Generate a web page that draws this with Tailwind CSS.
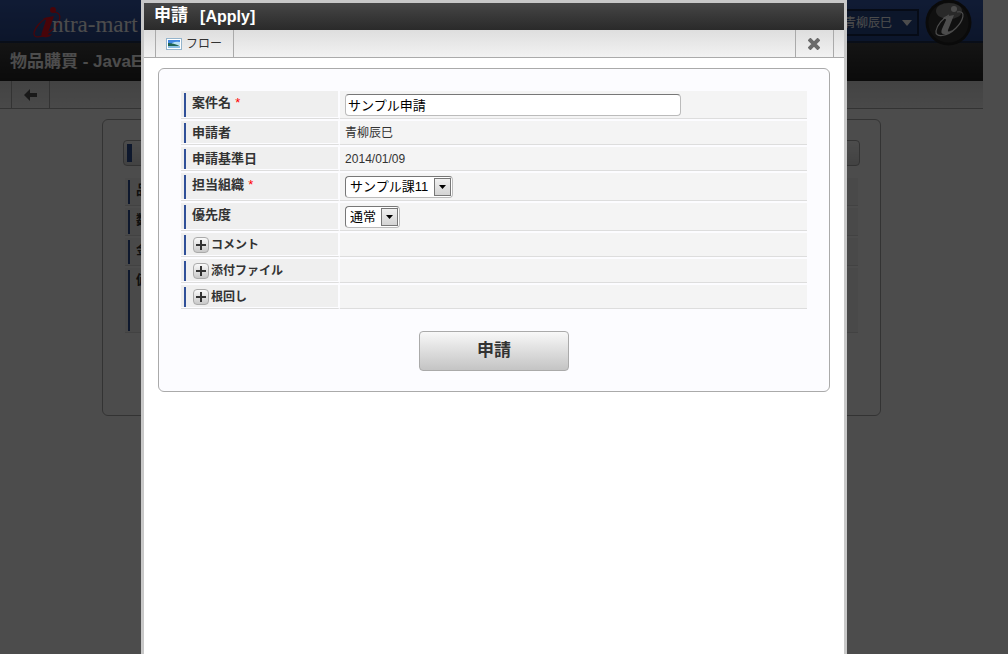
<!DOCTYPE html>
<html lang="ja">
<head>
    <meta charset="UTF-8">
    <meta name="viewport" content="width=device-width, initial-scale=1.0">
    <title>申請 [Apply]</title>
    <script src="https://cdn.jsdelivr.net/npm/@tailwindcss/browser@4"></script>
</head>
<body class="min-h-screen overflow-x-hidden bg-white font-['Liberation_Sans','Noto_Sans_CJK_JP',sans-serif] text-xs text-[#333]">

    <!-- Page behind the dialog -->
    <div class="mr-[25px]">
        <header class="flex h-[43px] items-center justify-between border-b-2 border-[#1f3050] bg-gradient-to-b from-[#385cb0] to-[#2a4a90] pl-[33px] pr-[11px] pt-1">
            <a href="#" class="flex items-end text-white" aria-label="intra-mart">
                <svg class="h-8 w-[19px] overflow-visible" viewBox="0 0 19 32" fill="none">
                    <path d="M21 5C30 5 28 16 19 23C10 31 0 32 1 26C2 20 9 13 14 11" stroke="#f01020" stroke-width="1.2"/>
                    <path d="M11 11l10-2-6 17q-1 3 4 1-3 4-8 3-4 0-2-5l4-12q0-2-3-1z" fill="#f01020"/>
                    <circle cx="20" cy="3" r="3" fill="#f01020"/>
                </svg>
                <span class="font-['Liberation_Serif',serif] text-[23px] leading-7">ntra-mart</span>
            </a>
            <div class="flex items-center gap-1.5">
                <button type="button" class="flex h-[27px] w-[90px] items-center justify-end gap-2.5 border-2 border-[#16264a] bg-[#2a4a8e] pr-[5px] text-white">
                    <span class="whitespace-nowrap">青柳辰巳</span>
                    <svg class="h-1.5 w-2.5" viewBox="0 0 10 6" fill="currentColor"><path d="M0 0h10L5 6z"/></svg>
                </button>
                <svg class="h-[47px] w-[47px]" viewBox="0 0 47 47" fill="none">
                    <circle cx="23.5" cy="23.5" r="23" fill="#222"/>
                    <circle cx="23.5" cy="23.5" r="20" fill="#383838"/>
                    <ellipse cx="24" cy="12" rx="13" ry="8" fill="#8a8a8a"/>
                    <path d="M32 13C42 11 38 22 31 29C22 38 10 39 11 32C12 26 18 19 24 16" stroke="#fff" stroke-width="1.2"/>
                    <path d="M19 18l10-2-6 15q-1 3 4 0-3 5-8 4-4 0-2-5l4-9q0-2-3-1z" fill="#fff"/>
                    <circle cx="29" cy="10" r="3" fill="#fff"/>
                </svg>
            </div>
        </header>
        <h1 class="flex h-[38px] items-center bg-gradient-to-b from-[#464646] to-[#252525] pl-2.5 text-[17px] font-bold text-white">物品購買 - JavaEE</h1>
        <div class="flex h-7 border-b border-[#aaa] bg-gradient-to-b from-[#e0e0e0] to-[#f4f4f4] pl-[11px]">
            <button type="button" class="flex w-[39px] items-center justify-center border-x border-[#aaa]" aria-label="戻る">
                <svg class="h-3 w-[13px]" viewBox="0 0 13 12" fill="#555"><path d="M0 6l6-6v4h7v4H6v4z"/></svg>
            </button>
        </div>
        <section class="mx-[102px] mt-2.5 rounded-md border border-[#aaa] px-5 pb-[82px] pt-5">
            <div class="mb-3 flex h-[26px] items-center rounded-sm border border-[#aaa] bg-gradient-to-b from-white to-[#ddd] pl-[3px]">
                <span class="h-[18px] w-[5px] bg-[#305098]"></span>
            </div>
            <ul class="mx-0.5 flex flex-col gap-0.5 text-[13px] font-bold leading-5">
                <li class="border-b border-[#ddd] bg-[#f4f4f4] pb-px pl-[3px] pt-0.5"><div class="h-6 border-l-2 border-[#305098] pl-1.5">品名</div></li>
                <li class="border-b border-[#ddd] bg-[#f4f4f4] pb-px pl-[3px] pt-0.5"><div class="h-6 border-l-2 border-[#305098] pl-1.5">数量</div></li>
                <li class="border-b border-[#ddd] bg-[#f4f4f4] pb-px pl-[3px] pt-0.5"><div class="h-6 border-l-2 border-[#305098] pl-1.5">金額</div></li>
                <li class="border-b border-[#ddd] bg-[#f4f4f4] pb-px pl-[3px] pt-0.5"><div class="h-[61px] border-l-2 border-[#305098] pl-1.5">備考</div></li>
            </ul>
        </section>
    </div>

    <!-- Overlay + dialog -->
    <div class="fixed inset-0 bg-black/70">
        <div role="dialog" aria-labelledby="dialog-title" class="ml-[14%] mr-[16%] h-full border-x-[3px] border-t-[3px] border-[#c8c8c8] bg-white">
            <h2 id="dialog-title" class="flex h-[27px] items-center gap-3 bg-gradient-to-b from-[#464646] to-[#2a2a2a] pl-2.5 font-bold text-white">
                <span class="text-[17px]">申請</span>
                <span class="text-base">[Apply]</span>
            </h2>
            <div class="flex h-7 justify-between border-b border-[#aaa] bg-gradient-to-b from-[#dedede] to-[#f2f2f2] pl-[11px] pr-2.5">
                <button type="button" class="flex w-[79px] items-center gap-1 whitespace-nowrap border-x border-[#aaa] pl-2.5">
                    <svg class="h-3 w-4 shrink-0" viewBox="0 0 16 12">
                        <rect x="0.5" y="0.5" width="15" height="11" fill="#fff" stroke="#94b4cc"/>
                        <path d="M2 2h12v5H2z" fill="#3f86e0"/>
                        <path d="M6 5q4-2 8-1v3H6z" fill="#b8e0f4"/>
                        <path d="M2 5q5 0 12 3H2z" fill="#1f6450"/>
                        <path d="M2 8h12v2H2z" fill="#8cc0e4"/>
                    </svg>
                    <span>フロー</span>
                </button>
                <button type="button" class="flex w-[39px] items-center justify-center border-x border-[#aaa]" aria-label="閉じる">
                    <svg class="h-3 w-3" viewBox="0 0 12 12" stroke="#6a6a6a" stroke-width="4"><path d="M1 1l10 10M11 1L1 11"/></svg>
                </button>
            </div>

            <form class="mx-3.5 mt-2.5 rounded-md border border-[#aaa] bg-[#fcfcff] px-[22px] py-5">
                <table class="w-full border-separate border-spacing-x-0 border-spacing-y-0.5 text-left leading-5">
                    <tbody>
                        <tr>
                            <th class="w-[159px] border-b border-r-2 border-b-[#ddd] border-r-[#fcfcff] p-0 pb-px text-[13px]">
                                <div class="bg-[#efefef] pl-[3px] pt-0.5">
                                    <label for="matter" class="block h-6 border-l-2 border-[#305098] pl-1.5">案件名<span class="pl-1 font-normal text-[#f00]">*</span></label>
                                </div>
                            </th>
                            <td class="border-b border-[#ddd] bg-[#f4f4f4] px-[5px] py-0">
                                <input id="matter" type="text" value="サンプル申請" class="block h-[22px] w-[336px] rounded-sm border border-[#bbb] border-t-[#777] bg-white px-0.5 text-[13px] text-black">
                            </td>
                        </tr>
                        <tr>
                            <th class="border-b border-r-2 border-b-[#ddd] border-r-[#fcfcff] p-0 pb-px text-[13px]">
                                <div class="bg-[#efefef] pl-[3px] pt-0.5"><div class="h-5 border-l-2 border-[#305098] pl-1.5">申請者</div></div>
                            </th>
                            <td class="border-b border-[#ddd] bg-[#f4f4f4] px-[5px] py-0">青柳辰巳</td>
                        </tr>
                        <tr>
                            <th class="border-b border-r-2 border-b-[#ddd] border-r-[#fcfcff] p-0 pb-px text-[13px]">
                                <div class="bg-[#efefef] pl-[3px] pt-0.5"><div class="h-5 border-l-2 border-[#305098] pl-1.5">申請基準日</div></div>
                            </th>
                            <td class="border-b border-[#ddd] bg-[#f4f4f4] px-[5px] py-0">2014/01/09</td>
                        </tr>
                        <tr>
                            <th class="border-b border-r-2 border-b-[#ddd] border-r-[#fcfcff] p-0 pb-px text-[13px]">
                                <div class="bg-[#efefef] pl-[3px] pt-0.5">
                                    <label for="org" class="block h-6 border-l-2 border-[#305098] pl-1.5">担当組織<span class="pl-1 font-normal text-[#f00]">*</span></label>
                                </div>
                            </th>
                            <td class="border-b border-[#ddd] bg-[#f4f4f4] px-[5px] py-0">
                                <div class="relative w-[108px]">
                                    <select id="org" class="block h-[22px] w-full appearance-none rounded-sm border border-[#bbb] border-t-[#777] border-l-[#777] bg-white pl-1 text-[13px] text-black"><option>サンプル課11</option></select>
                                    <span class="pointer-events-none absolute inset-y-0.5 right-0.5 flex w-[17px] items-center justify-center border border-[#777] bg-gradient-to-b from-[#f0f0f0] to-[#d4d4d4]">
                                        <svg class="h-1 w-[7px]" viewBox="0 0 7 4"><path d="M0 0h7L3.5 4z"/></svg>
                                    </span>
                                </div>
                            </td>
                        </tr>
                        <tr>
                            <th class="border-b border-r-2 border-b-[#ddd] border-r-[#fcfcff] p-0 pb-px text-[13px]">
                                <div class="bg-[#efefef] pl-[3px] pt-0.5">
                                    <label for="priority" class="block h-6 border-l-2 border-[#305098] pl-1.5">優先度</label>
                                </div>
                            </th>
                            <td class="border-b border-[#ddd] bg-[#f4f4f4] px-[5px] py-0">
                                <div class="relative w-[55px]">
                                    <select id="priority" class="block h-[22px] w-full appearance-none rounded-sm border border-[#bbb] border-t-[#777] border-l-[#777] bg-white pl-1 text-[13px] text-black"><option>通常</option></select>
                                    <span class="pointer-events-none absolute inset-y-0.5 right-0.5 flex w-[17px] items-center justify-center border border-[#777] bg-gradient-to-b from-[#f0f0f0] to-[#d4d4d4]">
                                        <svg class="h-1 w-[7px]" viewBox="0 0 7 4"><path d="M0 0h7L3.5 4z"/></svg>
                                    </span>
                                </div>
                            </td>
                        </tr>
                        <!-- Collapsed rows -->
                        <tr>
                            <th class="border-b border-r-2 border-b-[#ddd] border-r-[#fcfcff] p-0 pb-px">
                                <div class="bg-[#efefef] pl-[3px] pt-0.5">
                                    <div class="flex h-5 items-center gap-0.5 border-l-2 border-[#305098] pl-[7px]">
                                        <button type="button" aria-label="コメントを開く" class="flex size-4 items-center justify-center rounded-sm border border-[#aaa] bg-gradient-to-b from-[#fafafa] to-[#c8c8c8]">
                                            <svg class="size-2.5" viewBox="0 0 10 10" stroke="#333" stroke-width="2"><path d="M5 0v10M0 5h10"/></svg>
                                        </button>
                                        <span>コメント</span>
                                    </div>
                                </div>
                            </th>
                            <td class="border-b border-[#ddd] bg-[#f4f4f4] p-0"></td>
                        </tr>
                        <tr>
                            <th class="border-b border-r-2 border-b-[#ddd] border-r-[#fcfcff] p-0 pb-px">
                                <div class="bg-[#efefef] pl-[3px] pt-0.5">
                                    <div class="flex h-5 items-center gap-0.5 border-l-2 border-[#305098] pl-[7px]">
                                        <button type="button" aria-label="添付ファイルを開く" class="flex size-4 items-center justify-center rounded-sm border border-[#aaa] bg-gradient-to-b from-[#fafafa] to-[#c8c8c8]">
                                            <svg class="size-2.5" viewBox="0 0 10 10" stroke="#333" stroke-width="2"><path d="M5 0v10M0 5h10"/></svg>
                                        </button>
                                        <span>添付ファイル</span>
                                    </div>
                                </div>
                            </th>
                            <td class="border-b border-[#ddd] bg-[#f4f4f4] p-0"></td>
                        </tr>
                        <tr>
                            <th class="border-b border-r-2 border-b-[#ddd] border-r-[#fcfcff] p-0 pb-px">
                                <div class="bg-[#efefef] pl-[3px] pt-0.5">
                                    <div class="flex h-5 items-center gap-0.5 border-l-2 border-[#305098] pl-[7px]">
                                        <button type="button" aria-label="根回しを開く" class="flex size-4 items-center justify-center rounded-sm border border-[#aaa] bg-gradient-to-b from-[#fafafa] to-[#c8c8c8]">
                                            <svg class="size-2.5" viewBox="0 0 10 10" stroke="#333" stroke-width="2"><path d="M5 0v10M0 5h10"/></svg>
                                        </button>
                                        <span>根回し</span>
                                    </div>
                                </div>
                            </th>
                            <td class="border-b border-[#ddd] bg-[#f4f4f4] p-0"></td>
                        </tr>
                    </tbody>
                </table>
                <div class="mt-5 text-center">
                    <button type="submit" class="h-10 w-[150px] rounded-sm border border-[#aaa] bg-gradient-to-b from-[#f8f8f8] to-[#c4c4c4] text-[17px] font-bold">申請</button>
                </div>
            </form>
        </div>
    </div>
</body>
</html>
